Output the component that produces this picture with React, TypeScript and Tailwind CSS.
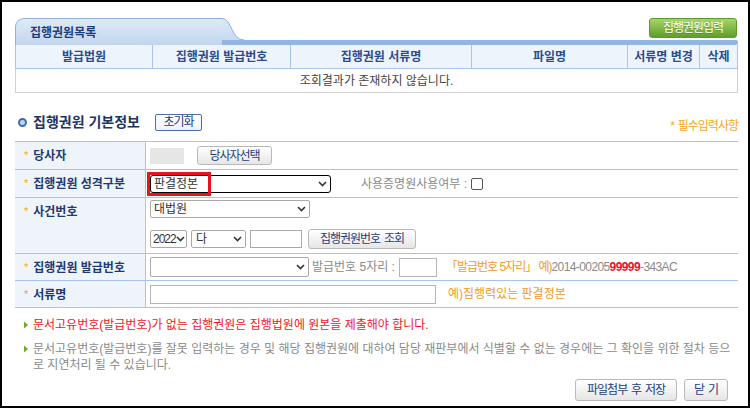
import React from "react";

const Chevron = ({ className = "" }: { className?: string }) => (
  <svg width="9" height="6" viewBox="0 0 9 6" className={className}>
    <path d="M1 1 L4.5 4.5 L8 1" fill="none" stroke="#333" strokeWidth="1.6" />
  </svg>
);

const Arrow = () => (
  <svg width="6" height="8" viewBox="0 0 6 8" className="shrink-0">
    <path d="M1 0.5 L5 4 L1 7.5 Z" fill="#6bab2c" />
  </svg>
);

const Label = ({ children }: { children: React.ReactNode }) => (
  <div className="w-[131px] shrink-0 bg-[#eff4fb] border-r border-[#a8c3ea] self-stretch">
    <div className="h-[27px] flex items-center pl-[9px] gap-[5px]">
      <span className="text-[#f5a623] text-[11px] leading-none">*</span>
      <span className="font-bold text-[#1f3a70]">{children}</span>
    </div>
  </div>
);

const GrayBtn = ({ children, className = "" }: { children: React.ReactNode; className?: string }) => (
  <div
    className={
      "flex items-center justify-center rounded-[3px] border border-[#b9b9b9] bg-gradient-to-b from-white to-[#e6e6e6] text-[#1f3d78] tracking-[-1px] [word-spacing:1.5px] " +
      className
    }
  >
    {children}
  </div>
);

export default function App() {
  return (
    <div className="w-[750px] h-[408px] border-2 border-black bg-white overflow-hidden font-['Liberation_Sans','Noto_Sans_CJK_KR',sans-serif] text-[12px] leading-[14px] text-[#333]">
      <div className="ml-[13px] w-[723px] pt-[16px]">
        {/* Tab row */}
        <div className="flex h-[27px]">
          <div className="w-[207px] h-full rounded-tl-[9px] border-l border-t border-[#8eb0dc] bg-gradient-to-b from-[#dfeaf7] to-[#c2d5ee] flex items-center pl-[14px] pt-[1px]">
            <span className="font-bold text-[#1b3d7c]">집행권원목록</span>
          </div>
          <svg width="22" height="27" viewBox="0 0 22 27" className="shrink-0">
            <defs>
              <linearGradient id="tg" x1="0" y1="0" x2="0" y2="1">
                <stop offset="0" stopColor="#dfeaf7" />
                <stop offset="1" stopColor="#c2d5ee" />
              </linearGradient>
            </defs>
            <path d="M0 0.5 C 10 0.5, 9 22, 22 22 L22 27 L0 27 Z" fill="url(#tg)" />
            <path d="M0 0.5 C 10 0.5, 9 22, 22 22" fill="none" stroke="#8eb0dc" strokeWidth="1" />
            <rect x="0" y="22" width="22" height="5" fill="#93b5e2" />
          </svg>
          <div className="flex-1 flex flex-col justify-end">
            <div className="flex justify-end pr-[1px]">
              <div className="w-[88px] h-[20px] rounded-[3px] border border-[#5b9b2b] bg-gradient-to-b from-[#a6d468] to-[#5e9f2a] text-white tracking-[-1px] flex items-center justify-center [text-shadow:0_1px_0_rgba(0,0,0,0.2)]">
                집행권원입력
              </div>
            </div>
            <div className="mt-[2px] h-[5px] bg-[#93b5e2] rounded-r-[2px]" />
          </div>
        </div>

        {/* Header */}
        <div className="grid grid-cols-[138px_138px_181px_156px_72px_38px] h-[24px] bg-[#eef4fc] border-b border-[#a9c3ea] font-bold text-[#2a4c8e]">
          {["발급법원", "집행권원 발급번호", "집행권원 서류명", "파일명", "서류명 변경", "삭제"].map((h, i) => (
            <div
              key={h}
              className={
                "flex items-center justify-center border-r border-[#a9c3ea] whitespace-nowrap " +
                (i === 0 ? "border-l" : "")
              }
            >
              {h}
            </div>
          ))}
        </div>
        <div className="h-[24px] border-x border-b border-[#d2d2d2] flex items-center justify-center text-[#444]">
          조회결과가 존재하지 않습니다.
        </div>

        {/* Section title */}
        <div className="mt-[19px] h-[20px] flex items-center pl-[3px]">
          <div className="w-[9px] h-[9px] rounded-full border-[2.5px] border-[#3f6cb0] bg-[#c4d7f2]" />
          <span className="ml-[6px] text-[14px] font-bold text-[#1d3563]">집행권원 기본정보</span>
          <div className="ml-[15px] w-[47px] h-[17px] rounded-[2px] border-[1.5px] border-[#4d6fa6] bg-gradient-to-b from-white to-[#eef2f8] flex items-center justify-center text-[#1f3d78] tracking-[-1px]">
            초기화
          </div>
          <span className="ml-auto self-end text-[#f5a623] mb-[-1px] tracking-[-1px] [word-spacing:1.5px]">* 필수입력사항</span>
        </div>

        {/* Form */}
        <div className="mt-[9px] border-t border-[#a8c3ea]">
          {/* Row 1 */}
          <div className="flex h-[28px] border-b border-[#a8c3ea]">
            <Label>당사자</Label>
            <div className="flex items-center pl-[4px]">
              <div className="w-[34px] h-[16px] bg-[#e6e6e6]" />
              <GrayBtn className="ml-[13px] w-[75px] h-[19px]">당사자선택</GrayBtn>
            </div>
          </div>
          {/* Row 2 */}
          <div className="flex h-[28px] border-b border-[#a8c3ea]">
            <Label>집행권원 성격구분</Label>
            <div className="flex items-center pl-[4px]">
              <div className="relative w-[181px] h-[18px] border border-black rounded-[3px] flex items-center justify-between pl-[3px] pr-[3px] bg-white">
                <span>판결정본</span>
                <Chevron />
                <div className="absolute left-[-4px] top-[-4px] w-[64px] h-[24px] border-[3px] border-[#e8141b]" />
              </div>
              <span className="ml-[30px] text-[#8a8a8a]">사용증명원사용여부 :</span>
              <div className="ml-[4px] w-[12px] h-[12px] rounded-[2px] border border-[#555] bg-white" />
            </div>
          </div>
          {/* Row 3 */}
          <div className="flex h-[56px] border-b border-[#a8c3ea]">
            <Label>사건번호</Label>
            <div className="flex flex-col pl-[4px] pt-[2px]">
              <div className="w-[160px] h-[18px] border border-[#a9a9a9] rounded-[2px] flex items-center justify-between px-[3px]">
                <span>대법원</span>
                <Chevron />
              </div>
              <div className="mt-[11px] flex items-center">
                <div className="w-[37px] h-[18px] border border-[#a9a9a9] rounded-[2px] flex items-center justify-between pl-[2px] pr-[1px] tracking-[-1px]">
                  <span>2022</span>
                  <Chevron />
                </div>
                <div className="ml-[4px] w-[55px] h-[18px] border border-[#a9a9a9] rounded-[2px] flex items-center justify-between pl-[4px] pr-[3px]">
                  <span>다</span>
                  <Chevron />
                </div>
                <div className="ml-[4px] w-[52px] h-[18px] border border-[#a9a9a9]" />
                <GrayBtn className="ml-[6px] w-[108px] h-[20px]">집행권원번호 조회</GrayBtn>
              </div>
            </div>
          </div>
          {/* Row 4 */}
          <div className="flex h-[27px] border-b border-[#a8c3ea]">
            <Label>집행권원 발급번호</Label>
            <div className="flex items-center pl-[4px] whitespace-nowrap">
              <div className="w-[159px] h-[20px] border border-[#a9a9a9] rounded-[2px] flex items-center justify-end pr-[3px]">
                <Chevron />
              </div>
              <span className="ml-[3px] text-[#8a8a8a]">발급번호 5자리 :</span>
              <div className="ml-[4px] w-[38px] h-[19px] border border-[#b5b5b5]" />
              <span className="ml-[9px] text-[#f39a1e] tracking-[-1px]">「발급번호 5자리」 예)</span>
              <span className="text-[#8a8a8a] tracking-[-0.6px]">
                2014-00205<b className="text-[#f0102a]">99999</b>-343AC
              </span>
            </div>
          </div>
          {/* Row 5 */}
          <div className="flex h-[27px] border-b border-[#a8c3ea]">
            <Label>서류명</Label>
            <div className="flex items-center pl-[4px]">
              <div className="w-[286px] h-[19px] border border-[#b5b5b5]" />
              <span className="ml-[12px] text-[#f39a1e]">예)집행력있는 판결정본</span>
            </div>
          </div>
        </div>

        {/* Notes */}
        <div className="mt-[9px] h-[16px] flex items-center pl-[8px] gap-[4px] text-[#f0161f] whitespace-nowrap">
          <Arrow />
          <span>문서고유번호(발급번호)가 없는 집행권원은 집행법원에 원본을 제출해야 합니다.</span>
        </div>
        <div className="mt-[8px] flex pl-[8px] gap-[4px] text-[#8a8a8a] leading-[16px] whitespace-nowrap">
          <div className="h-[16px] flex items-center">
            <Arrow />
          </div>
          <div>
            문서고유번호(발급번호)를 잘못 입력하는 경우 및 해당 집행권원에 대하여 담당 재판부에서 식별할 수 없는 경우에는 그 확인을 위한 절차 등으
            <br />
            로 지연처리 될 수 있습니다.
          </div>
        </div>

        {/* Buttons */}
        <div className="mt-[6px] flex justify-end pr-[10px] gap-[7px]">
          <GrayBtn className="w-[102px] h-[22px]">파일첨부 후 저장</GrayBtn>
          <GrayBtn className="w-[44px] h-[22px]">닫 기</GrayBtn>
        </div>
      </div>
    </div>
  );
}
